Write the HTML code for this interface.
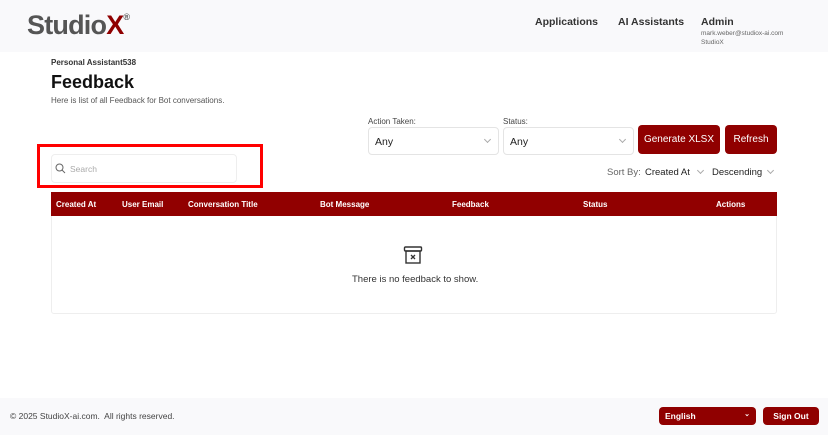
<!DOCTYPE html>
<html><head><style>
*{box-sizing:border-box;margin:0;padding:0}
body{width:828px;height:435px;background:#fff;font-family:"Liberation Sans",sans-serif;position:relative;overflow:hidden;color:#222}
.abs{position:absolute}
.hdr{left:0;top:0;width:828px;height:52px;background:#f9f9fb}
.logo{left:27px;top:10px;font-size:27px;font-weight:bold;color:#555;letter-spacing:-0.8px}
.logo span{color:#8f0000}
.logo sup{font-size:9px;color:#555;vertical-align:top;position:relative;top:2px}
.nav{font-size:10.5px;font-weight:bold;color:#333;top:16px}
.small{font-size:6.5px;color:#666}
.sel{border:1px solid #e4e4e4;border-radius:4px;height:28px;font-size:10.5px;padding:8px 6px;color:#222}
.chev{position:absolute;right:8px;top:9px;width:5px;height:5px;border-right:1px solid #aaa;border-bottom:1px solid #aaa;transform:rotate(45deg)}
.btn{background:#900000;color:#fff;border-radius:4px;font-size:10px;text-align:center}
.th{font-size:8px;font-weight:bold;color:#fff;top:200px}
</style></head><body>
<div class="abs hdr"></div>
<div class="abs logo">Studio<span>X</span><sup>®</sup></div>
<div class="abs nav" style="left:535px">Applications</div>
<div class="abs nav" style="left:618px">AI Assistants</div>
<div class="abs nav" style="left:701px">Admin</div>
<div class="abs small" style="left:701px;top:30px">mark.weber@studiox-ai.com</div>
<div class="abs small" style="left:701px;top:39px">StudioX</div>

<div class="abs" style="left:51px;top:58px;font-size:8px;font-weight:bold;color:#333">Personal Assistant538</div>
<div class="abs" style="left:51px;top:72px;font-size:18px;font-weight:bold;color:#111">Feedback</div>
<div class="abs" style="left:51px;top:96px;font-size:8px;color:#555">Here is list of all Feedback for Bot conversations.</div>

<div class="abs" style="left:368px;top:117px;font-size:8px;color:#444">Action Taken:</div>
<div class="abs sel" style="left:368px;top:127px;width:131px">Any<i class="chev"></i></div>
<div class="abs" style="left:503px;top:117px;font-size:8px;color:#444">Status:</div>
<div class="abs sel" style="left:503px;top:127px;width:131px">Any<i class="chev"></i></div>
<div class="abs btn" style="left:638px;top:125px;width:82px;height:29px;line-height:29px">Generate XLSX</div>
<div class="abs btn" style="left:725px;top:125px;width:52px;height:29px;line-height:29px">Refresh</div>

<div class="abs" style="left:607px;top:167px;font-size:9.5px;color:#666">Sort By:</div>
<div class="abs" style="left:645px;top:167px;font-size:9.5px;color:#222">Created At</div>
<div class="abs chev" style="left:698px;top:168px;right:auto"></div>
<div class="abs" style="left:712px;top:167px;font-size:9.5px;color:#222">Descending</div>
<div class="abs chev" style="left:768px;top:168px;right:auto"></div>

<div class="abs" style="left:37px;top:144px;width:226px;height:44px;border:3px solid #f00"></div>
<div class="abs" style="left:51px;top:154px;width:186px;height:29px;border:1px solid #eee;border-radius:4px"></div>
<svg class="abs" style="left:55px;top:163px" width="11" height="11" viewBox="0 0 11 11"><circle cx="4.5" cy="4.5" r="3.5" fill="none" stroke="#666" stroke-width="1"/><path d="M7 7l3 3" stroke="#666"/></svg>
<div class="abs" style="left:70px;top:164px;font-size:8.5px;color:#aaa">Search</div>

<div class="abs" style="left:51px;top:192px;width:726px;height:122px;border:1px solid #eee;border-radius:3px"></div>
<div class="abs" style="left:51px;top:192px;width:726px;height:24px;background:#910000"></div>
<div class="abs th" style="left:56px">Created At</div>
<div class="abs th" style="left:122px">User Email</div>
<div class="abs th" style="left:188px">Conversation Title</div>
<div class="abs th" style="left:320px">Bot Message</div>
<div class="abs th" style="left:452px">Feedback</div>
<div class="abs th" style="left:583px">Status</div>
<div class="abs th" style="left:716px">Actions</div>

<svg class="abs" style="left:403px;top:245px" width="20" height="20" viewBox="0 0 20 20"><rect x="1.5" y="2" width="17" height="4" rx="1" fill="none" stroke="#333" stroke-width="1.4"/><rect x="3" y="6" width="14" height="12" fill="none" stroke="#333" stroke-width="1.4"/><path d="M8 10l4 4M12 10l-4 4" stroke="#333" stroke-width="1.3"/></svg>
<div class="abs" style="left:352px;top:274px;font-size:9.5px;color:#333">There is no feedback to show.</div>

<div class="abs" style="left:0;top:398px;width:828px;height:37px;background:#f9f9fb"></div>
<div class="abs" style="left:10px;top:411px;font-size:8.5px;color:#444">© 2025 StudioX-ai.com.&nbsp; All rights reserved.</div>
<div class="abs btn" style="left:659px;top:407px;width:97px;height:18px;font-size:8.5px;font-weight:bold;text-align:left;padding:4px 6px">English<span style="position:absolute;right:6px;top:3px;font-size:7px">⌄</span></div>
<div class="abs btn" style="left:763px;top:407px;width:56px;height:18px;line-height:18px;font-size:8.5px;font-weight:bold">Sign Out</div>
</body></html>
